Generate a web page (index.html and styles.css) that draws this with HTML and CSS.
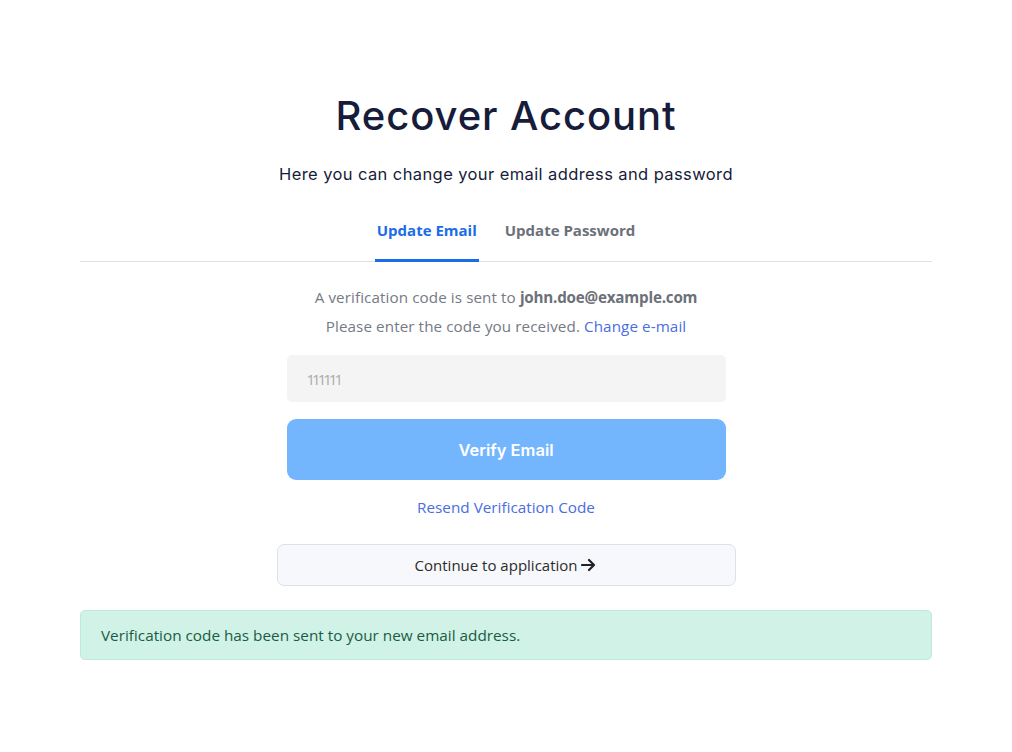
FILE: index.html
```html
<!DOCTYPE html>
<html>
    <head>
        <title>Recover Account</title>
        <link rel="stylesheet" href="styles.css">
    </head>
    <body>
        <div class="page">
            <h1 class="title">Recover Account</h1>
            <p class="subtitle">Here you can change your email address and password</p>

            <!-- Tabs -->
            <div class="tabs">
                <a class="tab active" href="#">Update Email</a>
                <a class="tab" href="#">Update Password</a>
            </div>

            <div class="form">
                <p class="info">A verification code is sent to <b>john.doe@example.com</b></p>
                <p class="info">Please enter the code you received. <a href="#" class="link">Change e-mail</a></p>
                <input class="code-input" type="text" placeholder="111111">
                <button class="verify-button">Verify Email</button>
                <a href="#" class="link resend">Resend Verification Code</a>
            </div>

            <button class="continue-button">Continue to application
                <svg width="16" height="14" viewBox="0 0 16 14"><path d="M1 7h12M8 2l5 5-5 5" fill="none" stroke="#222" stroke-width="2.2" stroke-linecap="round" stroke-linejoin="round"/></svg>
            </button>

            <div class="alert">Verification code has been sent to your new email address.</div>
        </div>
    </body>
</html>
```

FILE: styles.css
```css
body {
    margin: 0;
    background: #fff;
    font-family: "Open Sans", sans-serif;
}

.page {
    width: 852px;
    margin: 0 auto;
    padding-top: 88px;
    display: flex;
    flex-direction: column;
    align-items: center;
}

.title {
    margin: 0;
    font-family: Inter, sans-serif;
    font-weight: 500;
    font-size: 40px;
    letter-spacing: 0.9px;
    line-height: 56px;
    color: #161c3a;
}

.subtitle {
    margin: 18px 0 0;
    font-family: Inter, sans-serif;
    font-size: 16.5px;
    letter-spacing: 0.4px;
    line-height: 24px;
    color: #161c3a;
}

.tabs {
    align-self: stretch;
    display: flex;
    justify-content: center;
    gap: 24px;
    margin-top: 32px;
    border-bottom: 1px solid #dee2e6;
}

.tab {
    padding: 2px 2px 19px;
    font-size: 15px;
    font-weight: 700;
    color: #6c7079;
    text-decoration: none;
    border-bottom: 3px solid transparent;
    margin-bottom: -1px;
}

.tab.active {
    color: #1a6ce8;
    border-bottom-color: #1a6ce8;
}

.form {
    width: 439px;
    display: flex;
    flex-direction: column;
    align-items: center;
    margin-top: 25px;
}

.info {
    margin: 0 0 8px;
    font-size: 15.2px;
    letter-spacing: 0.1px;
    line-height: 21px;
    color: #757a85;
}

.info b {
    color: #6c7079;
    letter-spacing: -0.2px;
}

.link {
    color: #4a6ee0;
    text-decoration: none;
}

.code-input {
    box-sizing: border-box;
    width: 100%;
    height: 47px;
    margin-top: 10px;
    padding: 0 20px;
    border: none;
    border-radius: 5px;
    background: #f4f4f4;
    font-family: "Open Sans", sans-serif;
    font-size: 15px;
    letter-spacing: -3px;
}

.code-input::placeholder {
    color: #aaaaaa;
}

.verify-button {
    width: 100%;
    height: 61px;
    margin-top: 17px;
    border: none;
    border-radius: 9px;
    background: #74b6fe;
    color: #fff;
    font-family: Inter, sans-serif;
    font-weight: 600;
    font-size: 16.5px;
}

.resend {
    margin-top: 17px;
    font-size: 15.3px;
    line-height: 20px;
}

.continue-button {
    box-sizing: border-box;
    width: 459px;
    height: 42px;
    margin-top: 27px;
    border: 1px solid #dfe1ea;
    border-radius: 7px;
    background: #f7f8fb;
    color: #2b2b2b;
    font-family: "Open Sans", sans-serif;
    font-size: 15px;
}

.continue-button svg {
    vertical-align: -1px;
}

.alert {
    box-sizing: border-box;
    align-self: stretch;
    height: 50px;
    margin-top: 24px;
    padding: 0 20px;
    display: flex;
    align-items: center;
    background: #d1f2e6;
    border: 1px solid #bdeadb;
    border-radius: 5px;
    color: #195c43;
    font-size: 15.3px;
}
```
